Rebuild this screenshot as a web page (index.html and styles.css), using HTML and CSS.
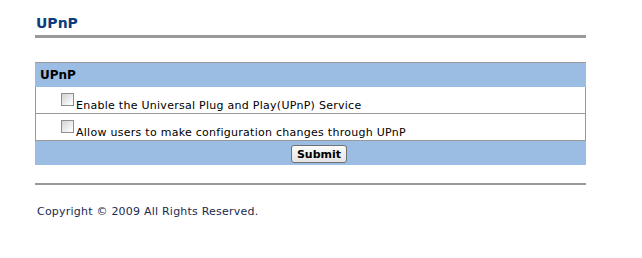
FILE: index.html
```html
<!DOCTYPE html>
<html lang="en">

<head>
    <meta charset="UTF-8">
    <title>UPnP</title>
    <link rel="stylesheet" href="styles.css">
</head>

<body>
    <div class="page">
        <h1 class="title">UPnP</h1>
        <div class="rule"></div>

        <form class="panel">
            <div class="panel-head">UPnP</div>
            <div class="opt">
                <input type="checkbox" id="upnpEnable">
                <label for="upnpEnable">Enable the Universal Plug and Play(UPnP) Service</label>
            </div>
            <div class="opt">
                <input type="checkbox" id="upnpConfig">
                <label for="upnpConfig">Allow users to make configuration changes through UPnP</label>
            </div>
            <div class="panel-foot">
                <button type="button" class="btn">Submit</button>
            </div>
        </form>

        <div class="rule rule-bottom"></div>
        <p class="copyright">Copyright &copy; 2009 All Rights Reserved.</p>
    </div>
</body>

</html>
```

FILE: styles.css
```css
body {
    margin: 0;
    font-family: Verdana, "DejaVu Sans", sans-serif;
    font-size: 11px;
    color: #000;
    background: #fff;
}

.page {
    width: 551px;
    margin-left: 35px;
    padding-top: 13px;
}

.title {
    margin: 0;
    padding-left: 1px;
    font-size: 14px;
    line-height: 20px;
    color: #0c3c7c;
}

.rule {
    height: 3px;
    margin-top: 2px;
    background: #999;
}

.panel {
    margin: 24px 0 0;
    border-top: 1px solid #999;
}

.panel-head {
    height: 24px;
    padding-left: 5px;
    line-height: 24px;
    font-size: 12px;
    font-weight: bold;
    background: #9bbde3;
}

.opt {
    display: flex;
    align-items: flex-end;
    height: 26px;
    padding-left: 25px;
    border: 1px solid #999;
    border-top: 0;
}

.opt input {
    align-self: flex-start;
    appearance: none;
    -webkit-appearance: none;
    width: 13px;
    height: 13px;
    margin: 6px 2px 0 0;
    border: 1px solid #8e8e8e;
    background: linear-gradient(135deg, #d2d2d2, #f4f4f4 70%, #fff);
}

.opt label {
    line-height: 12px;
    margin-bottom: 1px;
    letter-spacing: 0.27px;
}

.panel-foot {
    height: 24px;
    padding-left: 17px;
    text-align: center;
    background: #9bbde3;
}

.btn {
    margin-top: 4px;
    height: 18px;
    padding: 0 5px;
    font-family: Verdana, "DejaVu Sans", sans-serif;
    font-size: 11px;
    font-weight: bold;
    color: #000;
    border: 1px solid #707070;
    border-radius: 3px;
    background: linear-gradient(#fbfbfb, #e3e3e3);
}

.rule-bottom {
    height: 2px;
    margin-top: 18px;
}

.copyright {
    margin: 20px 0 0 2px;
    line-height: 14px;
    letter-spacing: 0.22px;
    color: #1a2a50;
}
```
